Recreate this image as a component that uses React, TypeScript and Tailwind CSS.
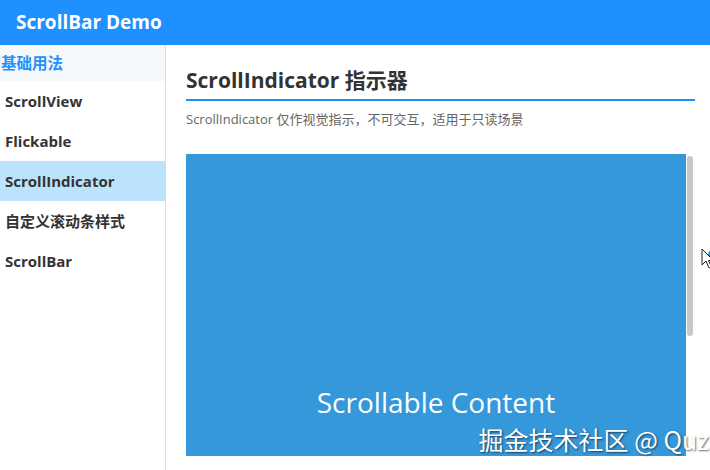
const font = "font-['Segoe_UI','Open_Sans','Noto_Sans_CJK_SC',sans-serif]";

const items = ["ScrollView", "Flickable", "ScrollIndicator", "自定义滚动条样式", "ScrollBar"];

function Sidebar() {
  return (
    <div className="w-[166px] shrink-0 border-r border-[#dcdcdc] bg-white">
      <div className="h-[36px] bg-[#f4f8fa] pl-[1px] text-[15.5px] font-bold leading-[36px] text-[#1e90ff]">基础用法</div>
      {items.map((t) => (
        <div
          key={t}
          className={
            "h-[40px] pl-[5px] text-[15px] font-bold leading-[40px] text-[#333] " +
            (t === "ScrollIndicator" ? "bg-[#bbe3fb]" : "")
          }
        >
          {t}
        </div>
      ))}
    </div>
  );
}

function Cursor() {
  return (
    <div className="absolute left-[701px] top-[248px]">
      <div className="absolute left-[7px] top-[1px] h-[12px] w-[8px] rounded-l-full bg-[#2b8be6]" />
      <svg width="14" height="22" viewBox="0 0 14 22" className="relative">
        <path d="M1 1 L1 17 L5 13 L8 20 L10.5 19 L7.5 12.5 L12.5 12.5 Z" fill="white" stroke="#222" strokeWidth="1" />
      </svg>
    </div>
  );
}

export default function App() {
  return (
    <div className={`relative flex h-[470px] w-[710px] flex-col overflow-hidden bg-white ${font}`}>
      <div className="flex h-[45px] shrink-0 items-center bg-[#1e90ff] pl-[16px] text-[19px] font-bold text-white">
        ScrollBar Demo
      </div>
      <div className="flex min-h-0 flex-1">
        <Sidebar />
        <div className="flex min-w-0 flex-1 flex-col pl-[20px] pr-[15px] pt-[20px]">
          <div className="text-[21px] font-bold leading-[30px] text-[#333]">ScrollIndicator 指示器</div>
          <div className="mt-[4px] h-[2px] bg-[#1e90ff]" />
          <div className="mt-[9px] text-[13px] leading-[18px] text-[#666]">
            ScrollIndicator 仅作视觉指示，不可交互，适用于只读场景
          </div>
          <div className="mt-[26px] flex h-[302px] shrink-0">
            <div className="flex flex-1 items-end justify-center bg-[#3498db] pb-[33px] text-[28px] text-white">
              Scrollable Content
            </div>
            <div className="ml-[1px] w-[8px] pt-[2px]">
              <div className="h-[180px] w-[6px] rounded-full bg-[#c8c8c8]" />
            </div>
          </div>
        </div>
      </div>
      <div className="absolute bottom-[18px] right-[1px] text-[25px] leading-none text-white [text-shadow:1px_1px_2px_rgba(0,0,0,0.6)] font-['Noto_Sans_CJK_SC',sans-serif]">
        掘金技术社区 @ Quz
      </div>
      <Cursor />
    </div>
  );
}
